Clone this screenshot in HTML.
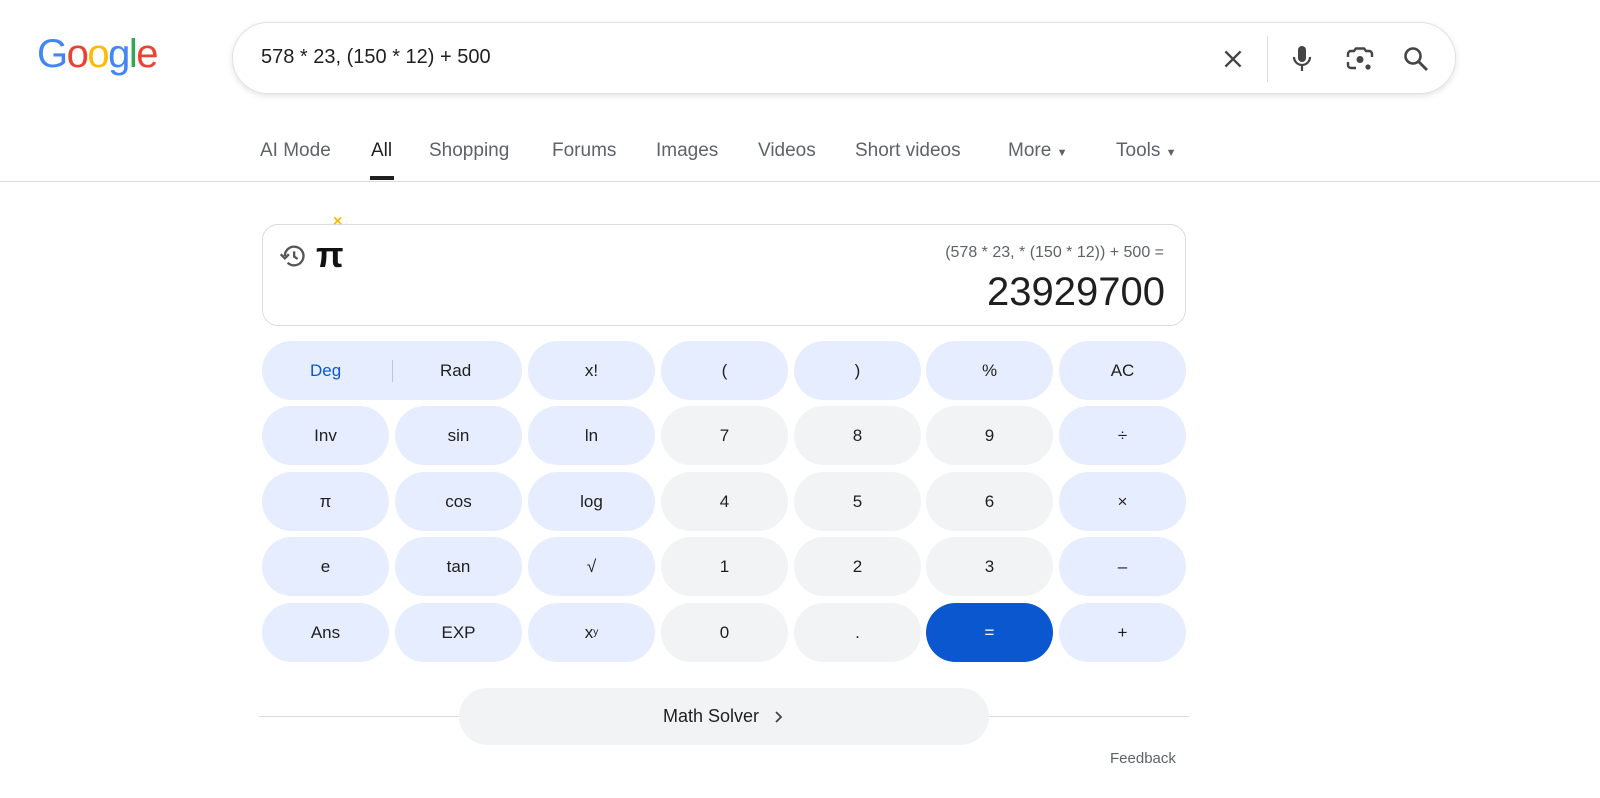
<!DOCTYPE html>
<html><head><meta charset="utf-8"><style>
body{margin:0;width:1600px;height:798px;background:#fff;font-family:"Liberation Sans",Arial,sans-serif;position:relative;overflow:hidden}
.abs{position:absolute}
.search{left:232px;top:22px;width:1224px;height:72px;border:1px solid #dfe1e5;border-radius:37px;box-shadow:0 2px 6px rgba(32,33,36,.12);box-sizing:border-box}
.q{left:261px;top:46px;font-size:20px;color:#1f1f1f}
.tab{top:140px;font-size:19px;color:#5f6368}
.btn{position:absolute;width:127px;height:59px;border-radius:30px;background:#e5edfe;display:flex;align-items:center;justify-content:center;font-size:17px;color:#1f1f1f}
.g{background:#f1f3f4}
</style></head><body>
<div class="abs" style="left:37px;top:32px;font-size:40px;letter-spacing:-1.5px;font-family:'Liberation Sans',sans-serif"><span style="color:#4285f4">G</span><span style="color:#ea4335">o</span><span style="color:#fbbc05">o</span><span style="color:#4285f4">g</span><span style="color:#34a853">l</span><span style="color:#ea4335">e</span></div>
<div class="abs search"></div>
<div class="abs q">578 * 23, (150 * 12) + 500</div>
<svg class="abs" style="left:1220px;top:46px" width="26" height="26" viewBox="0 0 24 24"><path d="M5 5L19 19M19 5L5 19" stroke="#444" stroke-width="2.2"/></svg>
<div class="abs" style="left:1267px;top:36px;width:1px;height:46px;background:#dadce0"></div>
<svg class="abs" style="left:1290px;top:44px" width="24" height="30" viewBox="0 0 24 30"><rect x="8" y="2" width="8" height="16" rx="4" fill="#444"/><path d="M4 13a8 8 0 0 0 16 0M12 21v6" stroke="#444" stroke-width="2.2" fill="none"/></svg>
<svg class="abs" style="left:1345px;top:45px" width="30" height="28" viewBox="0 0 30 28"><path d="M3 12V9a3 3 0 0 1 3-3h3l2-2.5h8L21 6h3a3 3 0 0 1 3 3v3M3 17v3a3 3 0 0 0 3 3h5" stroke="#444" stroke-width="2.4" fill="none"/><circle cx="15" cy="14.5" r="3.5" fill="#444"/><circle cx="23" cy="22" r="2.6" fill="#444"/></svg>
<svg class="abs" style="left:1401px;top:44px" width="30" height="30" viewBox="0 0 30 30"><circle cx="12" cy="12" r="7.5" stroke="#444" stroke-width="2.6" fill="none"/><path d="M17.5 17.5L26 26" stroke="#444" stroke-width="2.8"/></svg>
<div class="abs tab" style="left:260px">AI Mode</div>
<div class="abs tab" style="left:371px;color:#1f1f1f">All</div>
<div class="abs" style="left:370px;top:176px;width:24px;height:4px;background:#1f1f1f"></div>
<div class="abs tab" style="left:429px">Shopping</div>
<div class="abs tab" style="left:552px">Forums</div>
<div class="abs tab" style="left:656px">Images</div>
<div class="abs tab" style="left:758px">Videos</div>
<div class="abs tab" style="left:855px">Short videos</div>
<div class="abs tab" style="left:1008px">More <span style="font-size:11px">▼</span></div>
<div class="abs tab" style="left:1116px">Tools <span style="font-size:11px">▼</span></div>
<div class="abs" style="left:0;top:181px;width:1600px;height:1px;background:#dadce0"></div>
<div class="abs" style="left:262px;top:224px;width:924px;height:102px;border:1px solid #dadce0;border-radius:16px;box-sizing:border-box"></div>
<div class="abs" style="left:333px;top:213px;color:#fbbc04;font-size:16px;font-weight:bold">×</div>
<svg class="abs" style="left:279px;top:242px" width="28" height="28" viewBox="0 0 24 24"><path d="M5 12a8 8 0 1 1 2.4 5.7" stroke="#555" stroke-width="2" fill="none"/><path d="M1.5 10.5L5 14l3.5-3.5" stroke="#555" stroke-width="2" fill="none"/><path d="M13 8v4.5l3 2" stroke="#555" stroke-width="2" fill="none"/></svg>
<div class="abs" style="left:316px;top:234px;font-size:36px;font-weight:bold;color:#111">π</div>
<div class="abs" style="left:800px;width:364px;text-align:right;top:244px;font-size:16px;color:#5f6368">(578 * 23, * (150 * 12)) + 500 =</div>
<div class="abs" style="left:800px;width:365px;text-align:right;top:270px;font-size:40px;color:#1f1f1f">23929700</div>

<div class="btn" style="left:262px;top:341px;width:260px"><span style="position:absolute;left:48px;color:#0b57d0">Deg</span><span style="position:absolute;left:130px;top:19px;width:1px;height:22px;background:#a8c7fa"></span><span style="position:absolute;left:178px">Rad</span></div>
<div class="btn" style="left:528px;top:341px">x!</div>
<div class="btn" style="left:661px;top:341px">(</div>
<div class="btn" style="left:794px;top:341px">)</div>
<div class="btn" style="left:926px;top:341px">%</div>
<div class="btn" style="left:1059px;top:341px">AC</div>

<div class="btn" style="left:262px;top:406px">Inv</div>
<div class="btn" style="left:395px;top:406px">sin</div>
<div class="btn" style="left:528px;top:406px">ln</div>
<div class="btn g" style="left:661px;top:406px">7</div>
<div class="btn g" style="left:794px;top:406px">8</div>
<div class="btn g" style="left:926px;top:406px">9</div>
<div class="btn" style="left:1059px;top:406px">÷</div>

<div class="btn" style="left:262px;top:472px">π</div>
<div class="btn" style="left:395px;top:472px">cos</div>
<div class="btn" style="left:528px;top:472px">log</div>
<div class="btn g" style="left:661px;top:472px">4</div>
<div class="btn g" style="left:794px;top:472px">5</div>
<div class="btn g" style="left:926px;top:472px">6</div>
<div class="btn" style="left:1059px;top:472px">×</div>

<div class="btn" style="left:262px;top:537px">e</div>
<div class="btn" style="left:395px;top:537px">tan</div>
<div class="btn" style="left:528px;top:537px">√</div>
<div class="btn g" style="left:661px;top:537px">1</div>
<div class="btn g" style="left:794px;top:537px">2</div>
<div class="btn g" style="left:926px;top:537px">3</div>
<div class="btn" style="left:1059px;top:537px">–</div>

<div class="btn" style="left:262px;top:603px">Ans</div>
<div class="btn" style="left:395px;top:603px">EXP</div>
<div class="btn" style="left:528px;top:603px">x<sup style="font-size:10px">y</sup></div>
<div class="btn g" style="left:661px;top:603px">0</div>
<div class="btn g" style="left:794px;top:603px">.</div>
<div class="btn" style="left:926px;top:603px;background:#0b57d0;color:#fff">=</div>
<div class="btn" style="left:1059px;top:603px">+</div>

<div class="abs" style="left:259px;top:716px;width:930px;height:1px;background:#dadce0"></div>
<div class="abs" style="left:459px;top:688px;width:530px;height:57px;border-radius:29px;background:#f1f3f4;display:flex;align-items:center;justify-content:center;font-size:18px;color:#1f1f1f">Math Solver<svg style="margin-left:14px" width="12" height="14" viewBox="0 0 12 14"><path d="M3 2l5 5-5 5" stroke="#444" stroke-width="1.8" fill="none"/></svg></div>
<div class="abs" style="left:1110px;top:750px;font-size:15px;color:#5f6368">Feedback</div>
</body></html>
